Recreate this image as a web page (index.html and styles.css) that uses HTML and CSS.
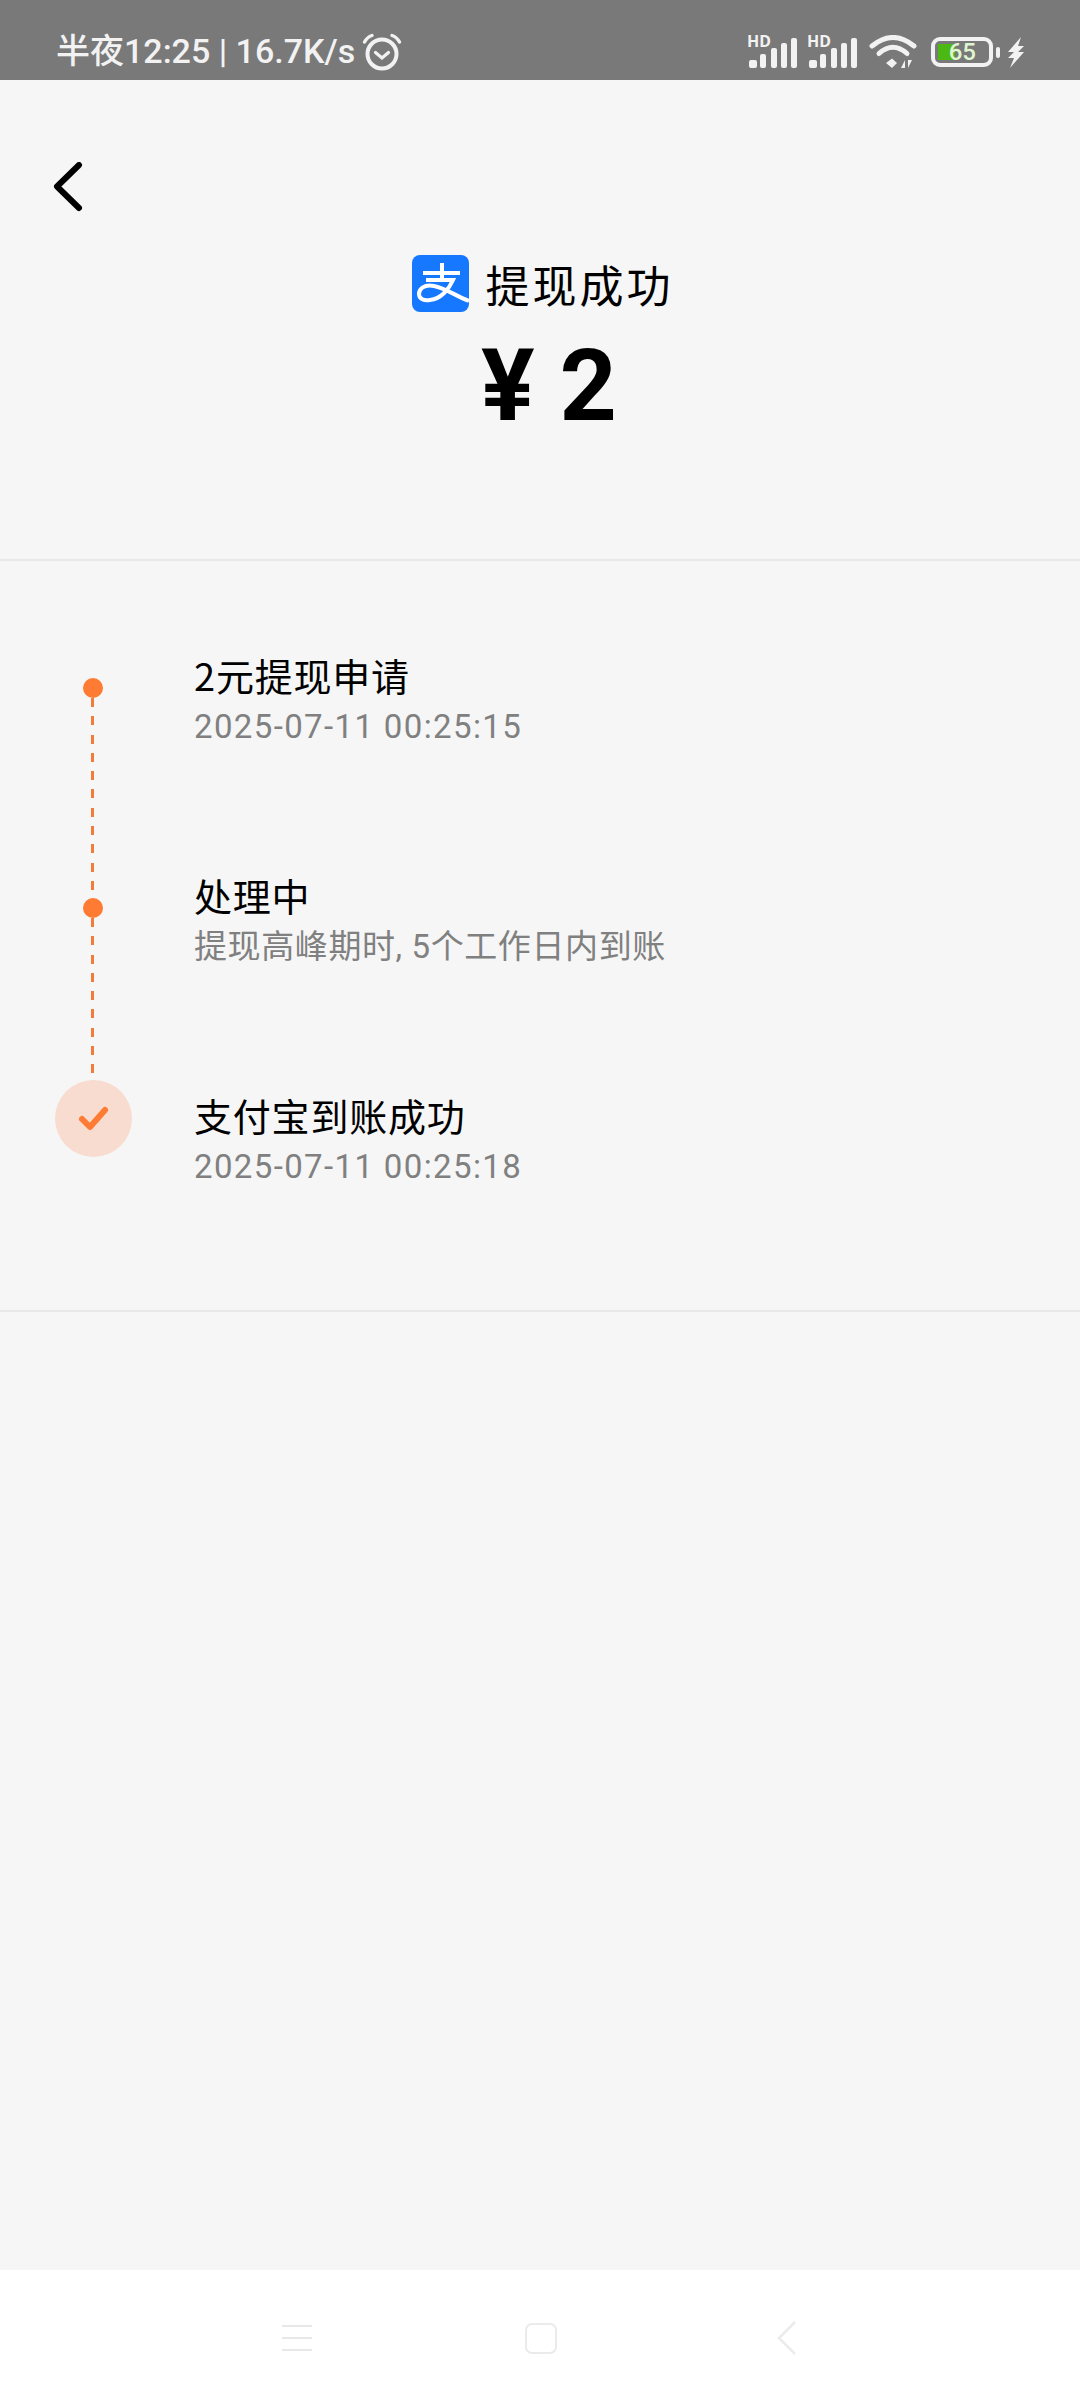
FILE: index.html
```html
<!DOCTYPE html>
<html lang="zh-CN">
<head>
  <meta charset="UTF-8" />
  <title>提现成功</title>
  <link rel="stylesheet" href="styles.css">
</head>
<body>

  <!-- Status bar -->
  <div class="status-bar">
    <div class="status-left">
      <span class="status-text">半夜12:25 | 16.7K/s</span>
      <svg class="alarm" width="40" height="38" viewBox="0 0 40 38" fill="none" stroke="#f2f2f2" stroke-linecap="round">
        <circle cx="20" cy="21" r="14.5" stroke-width="4" />
        <path d="M13.5 19.5 L20 25 L26.5 19.5" stroke-width="3.2" />
        <path d="M2.5 9 C4.5 5.5 7 3.5 10 2.5 M37.5 9 C35.5 5.5 33 3.5 30 2.5" stroke-width="3.4" />
      </svg>
    </div>
    <div class="status-right">
      <svg class="signal" width="50" height="44" viewBox="0 0 50 44">
        <text x="0" y="20" class="hd">HD</text>
        <rect x="2" y="33" width="8" height="8" rx="2" />
        <rect x="13" y="27" width="6" height="14" rx="2" />
        <rect x="24" y="21" width="6" height="20" rx="2" />
        <rect x="34" y="16" width="6" height="25" rx="2" />
        <rect x="44" y="11" width="6" height="30" rx="2" />
      </svg>
      <svg class="signal" width="50" height="44" viewBox="0 0 50 44">
        <text x="0" y="20" class="hd">HD</text>
        <rect x="2" y="33" width="8" height="8" rx="2" />
        <rect x="13" y="27" width="6" height="14" rx="2" />
        <rect x="24" y="21" width="6" height="20" rx="2" />
        <rect x="34" y="16" width="6" height="25" rx="2" />
        <rect x="44" y="11" width="6" height="30" rx="2" />
      </svg>
      <svg class="wifi" width="48" height="34" viewBox="0 0 48 34" fill="none" stroke="#f2f2f2" stroke-width="5" stroke-linecap="round">
        <path d="M3 11 Q24 -6 45 11" />
        <path d="M10 18.5 Q24 6 38 18.5" />
        <path d="M17 28 L23 23.5 L28 28 L23 33 Z" fill="#f2f2f2" stroke="none" />
        <path d="M36 25 V33 H32 Z M39 33 V25 H43 Z" fill="#f2f2f2" stroke="none" />
      </svg>
      <div class="battery">
        <div class="battery-fill"></div>
        <span class="battery-num">65</span>
      </div>
      <div class="battery-nub"></div>
      <svg class="bolt" width="18" height="31" viewBox="0 0 18 31">
        <path d="M14 0 L1 15 L7 15 L1 21 L7 21 L3 31 L17 15 L11 15 L17 9 L11 9 Z" fill="#f2f2f2" />
      </svg>
    </div>
  </div>

  <!-- Header -->
  <header class="head">
    <svg class="back" width="32" height="50" viewBox="0 0 32 50" fill="none" stroke="#000" stroke-width="6" stroke-linecap="round" stroke-linejoin="round">
      <path d="M27 3 L5 24.5 L27 46" />
    </svg>
    <div class="head-title">
      <svg class="logo" width="57" height="57" viewBox="0 0 57 57">
        <rect width="57" height="57" rx="8" fill="#1677ff" />
        <path d="M57 46 C44 41 33 33 22 31 C12 29 7 34 7 39 C7 44 12 46 18 45 C29 44 37 34 41 25 H14" fill="none" stroke="#fff" stroke-width="4" />
        <path d="M11 18 H48 M30 8 V25" fill="none" stroke="#fff" stroke-width="4" />
      </svg>
      <span class="title-text">提现成功</span>
    </div>
    <div class="amount">¥ 2</div>
  </header>

  <!-- Timeline -->
  <section class="timeline">
    <div class="step">
      <div class="node">
        <div class="dot"></div>
        <div class="dash"></div>
      </div>
      <div class="step-text">
        <div class="step-title">2元提现申请</div>
        <div class="step-sub step-date">2025-07-11 00:25:15</div>
      </div>
    </div>
    <div class="step">
      <div class="node">
        <div class="dot"></div>
        <div class="dash"></div>
      </div>
      <div class="step-text">
        <div class="step-title">处理中</div>
        <div class="step-sub">提现高峰期时, 5个工作日内到账</div>
      </div>
    </div>
    <div class="step last">
      <div class="node">
        <div class="done">
          <svg width="30" height="26" viewBox="0 0 30 26" fill="none" stroke="#fd7b32" stroke-width="6" stroke-linecap="round" stroke-linejoin="round">
            <path d="M3 13 L11 21 L26 4" />
          </svg>
        </div>
      </div>
      <div class="step-text">
        <div class="step-title">支付宝到账成功</div>
        <div class="step-sub step-date">2025-07-11 00:25:18</div>
      </div>
    </div>
  </section>

  <div class="filler"></div>

  <!-- Nav bar -->
  <nav class="navbar">
    <div class="nav-menu"><i></i><i></i><i></i></div>
    <div class="nav-home"></div>
    <svg width="20" height="34" viewBox="0 0 20 34" fill="none" stroke="#ebebeb" stroke-width="2.5">
      <path d="M18 1 L2 17 L18 33" />
    </svg>
  </nav>

</body>
</html>
```

FILE: styles.css
```css
* {
  box-sizing: border-box;
}

html, body {
  margin: 0;
  padding: 0;
}

body {
  width: 1080px;
  height: 2400px;
  display: flex;
  flex-direction: column;
  background-color: #f6f6f6;
  font-family: 'Roboto', 'Noto Sans CJK SC', sans-serif;
  color: #000;
}

/* Status bar */
.status-bar {
  height: 80px;
  flex: none;
  background-color: #797979;
  display: flex;
  justify-content: space-between;
  align-items: flex-start;
  padding: 27px 55px 0 56px;
}

.status-left {
  display: flex;
  align-items: flex-start;
  gap: 7px;
}

.status-text {
  font-size: 34px;
  line-height: 50px;
  margin-top: -1px;
  font-weight: 500;
  color: #f2f2f2;
  white-space: nowrap;
}

.alarm {
  margin-top: 6px;
}

.status-right {
  display: flex;
  align-items: flex-start;
}

.signal {
  margin-right: 10px;
  fill: #f2f2f2;
}

.signal + .signal {
  margin-right: 12px;
}

.hd {
  font-family: 'Noto Sans', sans-serif;
  font-size: 16px;
  font-weight: 700;
}

.wifi {
  margin: 8px 14px 0 0;
}

.battery {
  position: relative;
  width: 62px;
  height: 30px;
  margin-top: 10px;
  border: 4px solid #f2f2f2;
  border-radius: 9px;
  display: flex;
  align-items: center;
  justify-content: flex-end;
  padding-right: 13px;
}

.battery-fill {
  position: absolute;
  left: 3px;
  top: 3px;
  width: 17px;
  height: 16px;
  background-color: #4cb814;
}

.battery-num {
  position: relative;
  font-size: 24px;
  line-height: 22px;
  font-weight: 500;
  color: #dff5cf;
}

.battery-nub {
  width: 4px;
  height: 11px;
  margin: 20px 7px 0 3px;
  border-radius: 2px;
  background-color: #f2f2f2;
}

.bolt {
  margin-top: 10px;
}

/* Header */
.head {
  position: relative;
  height: 481px;
  flex: none;
  border-bottom: 2px solid #e8e8e8;
  padding-top: 175px;
  display: flex;
  flex-direction: column;
  align-items: center;
}

.back {
  position: absolute;
  left: 52px;
  top: 82px;
}

.head-title {
  display: flex;
  align-items: center;
  gap: 17px;
  height: 57px;
  margin-left: 5px;
}

.title-text {
  font-family: 'Noto Sans CJK SC', sans-serif;
  font-size: 44px;
  letter-spacing: 3px;
  white-space: nowrap;
}

.amount {
  margin: 18px 0 0 18px;
  font-family: 'Roboto', sans-serif;
  font-size: 100px;
  line-height: 112px;
  font-weight: 700;
  white-space: nowrap;
}

/* Timeline */
.timeline {
  height: 751px;
  flex: none;
  border-bottom: 2px solid #e8e8e8;
  padding-top: 91px;
}

.step {
  display: flex;
  height: 220px;
}

.node {
  width: 194px;
  flex: none;
  display: flex;
  flex-direction: column;
  align-items: flex-start;
  padding-top: 26px;
  padding-left: 83px;
}

.dot {
  width: 20px;
  height: 20px;
  flex: none;
  border-radius: 50%;
  background-color: #fd7b32;
}

.dash {
  width: 3px;
  flex: 1;
  margin: 0 0 -26px 8px;
  background-image: repeating-linear-gradient(to bottom, #f27c3c 0, #f27c3c 9px, transparent 9px, transparent 18.3px);
}

.last .node {
  padding-top: 0;
  padding-left: 55px;
}

.done {
  width: 77px;
  height: 77px;
  margin-top: -12px;
  border-radius: 50%;
  background-color: #f8dccf;
  display: flex;
  align-items: center;
  justify-content: center;
}

.step-text {
  margin-top: -2px;
}

.step-title {
  font-family: 'Noto Sans CJK SC', sans-serif;
  font-size: 38px;
  letter-spacing: 0.8px;
  line-height: 50px;
  margin-bottom: 4px;
  white-space: nowrap;
}

.step-sub {
  font-size: 33px;
  letter-spacing: 0.6px;
  line-height: 46px;
  color: #808080;
  white-space: nowrap;
}

.step-date {
  letter-spacing: 1.37px;
}

.filler {
  flex: 1;
}

/* Nav bar */
.navbar {
  height: 130px;
  flex: none;
  background-color: #fff;
  display: flex;
  align-items: center;
  padding: 6px 283px 0 282px;
  justify-content: space-between;
}

.nav-menu {
  width: 30px;
  display: flex;
  flex-direction: column;
  gap: 10px;
}

.nav-menu i {
  display: block;
  height: 2px;
  background-color: #e8e8e8;
}

.nav-home {
  width: 32px;
  height: 31px;
  margin-right: 8px;
  border: 2px solid #ebebeb;
  border-radius: 7px;
}
```
